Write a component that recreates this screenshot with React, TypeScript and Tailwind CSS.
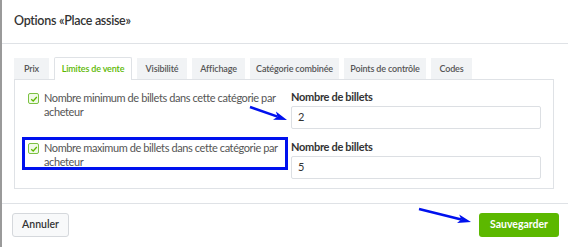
import React from 'react'

const TABS = [
  { label: 'Prix', w: 'w-[35px]' },
  { label: 'Limites de vente', w: 'w-[78px]', active: true },
  { label: 'Visibilité', w: 'w-[50px]' },
  { label: 'Affichage', w: 'w-[53px]' },
  { label: 'Catégorie combinée', w: 'w-[89px]' },
  { label: 'Points de contrôle', w: 'w-[82px]' },
  { label: 'Codes', w: 'w-[41px]' },
]

function Check() {
  return (
    <span className="mt-[2px] flex h-[11px] w-[11px] shrink-0 items-center justify-center rounded-[2px] border border-[#7cc242] bg-[#f1fae8]">
      <svg viewBox="0 0 10 10" className="h-[8px] w-[8px]">
        <path d="M1.5 5.2 L4 7.5 L8.5 2.5" fill="none" stroke="#5cb800" strokeWidth="1.6" />
      </svg>
    </span>
  )
}

function LimitRow({ text, value }: { text: string; value: string }) {
  return (
    <div className="flex">
      <div className="flex w-[263px] gap-[5px] pt-[1px]">
        <Check />
        <p className="w-[240px] text-[11px] leading-[14px] tracking-[-0.4px] text-[#555]">{text}</p>
      </div>
      <div className="w-[250px]">
        <div className="mb-[2px] text-[11px] font-bold leading-[14px] tracking-[-0.3px] text-[#333]">Nombre de billets</div>
        <div className="flex h-[23px] items-center rounded-[2px] border border-[#dcdfe3] bg-white px-[6px] text-[11px] text-[#333]">
          {value}
        </div>
      </div>
    </div>
  )
}

function Arrow({ className, x1, y1, x2, y2 }: { className: string; x1: number; y1: number; x2: number; y2: number }) {
  const ang = Math.atan2(y2 - y1, x2 - x1)
  const len = 14
  const spread = 0.32
  const ax = x2 - len * Math.cos(ang - spread)
  const ay = y2 - len * Math.sin(ang - spread)
  const bx = x2 - len * Math.cos(ang + spread)
  const by = y2 - len * Math.sin(ang + spread)
  const mx = x2 - 10 * Math.cos(ang)
  const my = y2 - 10 * Math.sin(ang)
  return (
    <svg className={className} width="568" height="247" viewBox="0 0 568 247">
      <line x1={x1} y1={y1} x2={mx} y2={my} stroke="#0011ee" strokeWidth="2.5" />
      <polygon points={`${x2},${y2} ${ax},${ay} ${mx},${my} ${bx},${by}`} fill="#0011ee" />
    </svg>
  )
}

export default function App() {
  return (
    <div className="relative h-[247px] w-[568px] overflow-hidden border-l-2 border-[#9a9a9a] bg-white" style={{ fontFamily: 'Lato, "Open Sans", sans-serif' }}>
      {/* Header */}
      <div className="flex h-[44px] items-center border-b border-[#dfe2e6] pl-[12px]">
        <h2 className="text-[12.5px] font-semibold tracking-[-0.3px] text-[#333]">Options «Place assise»</h2>
      </div>

      {/* Body */}
      <div className="px-[12px] pt-[13px]">
        <div className="flex h-[22px] items-end gap-[5px]">
          {TABS.map(t => (
            <div
              key={t.label}
              className={`${t.w} flex items-center justify-center text-[9px] font-semibold tracking-[-0.15px] ${
                t.active
                  ? 'relative z-10 -mb-px h-[23px] rounded-t-[2px] border border-b-0 border-[#dfe2e6] bg-white text-[#5cb800]'
                  : 'h-[21px] bg-[#f1f3f5] text-[#555]'
              }`}
            >
              {t.label}
            </div>
          ))}
        </div>
        <div className="flex h-[110px] w-[540px] flex-col gap-[11px] border border-[#dfe2e6] pl-[13px] pt-[10px]">
          <LimitRow text="Nombre minimum de billets dans cette catégorie par acheteur" value="2" />
          <LimitRow text="Nombre maximum de billets dans cette catégorie par acheteur" value="5" />
        </div>
      </div>

      {/* Footer */}
      <div className="mt-[14px] flex items-center justify-between border-t border-[#dfe2e6] pl-[10px] pr-[9px] pt-[9px]">
        <button className="h-[24px] w-[57px] rounded-[3px] border border-[#d5d8dc] bg-[#f8f9fa] text-[10.5px] font-semibold text-[#333]">
          Annuler
        </button>
        <button className="h-[24px] w-[80px] rounded-[3px] bg-[#5cb800] text-[10.5px] font-bold text-white">
          Sauvegarder
        </button>
      </div>

      {/* Annotations */}
      <div className="pointer-events-none absolute left-[20px] top-[137px] h-[33px] w-[266px] border-[3px] border-[#0011ee]" />
      <Arrow className="pointer-events-none absolute -left-[2px] top-0" x1={250} y1={107} x2={287} y2={120} />
      <Arrow className="pointer-events-none absolute -left-[2px] top-0" x1={419} y1={209} x2={471} y2={222} />
    </div>
  )
}
